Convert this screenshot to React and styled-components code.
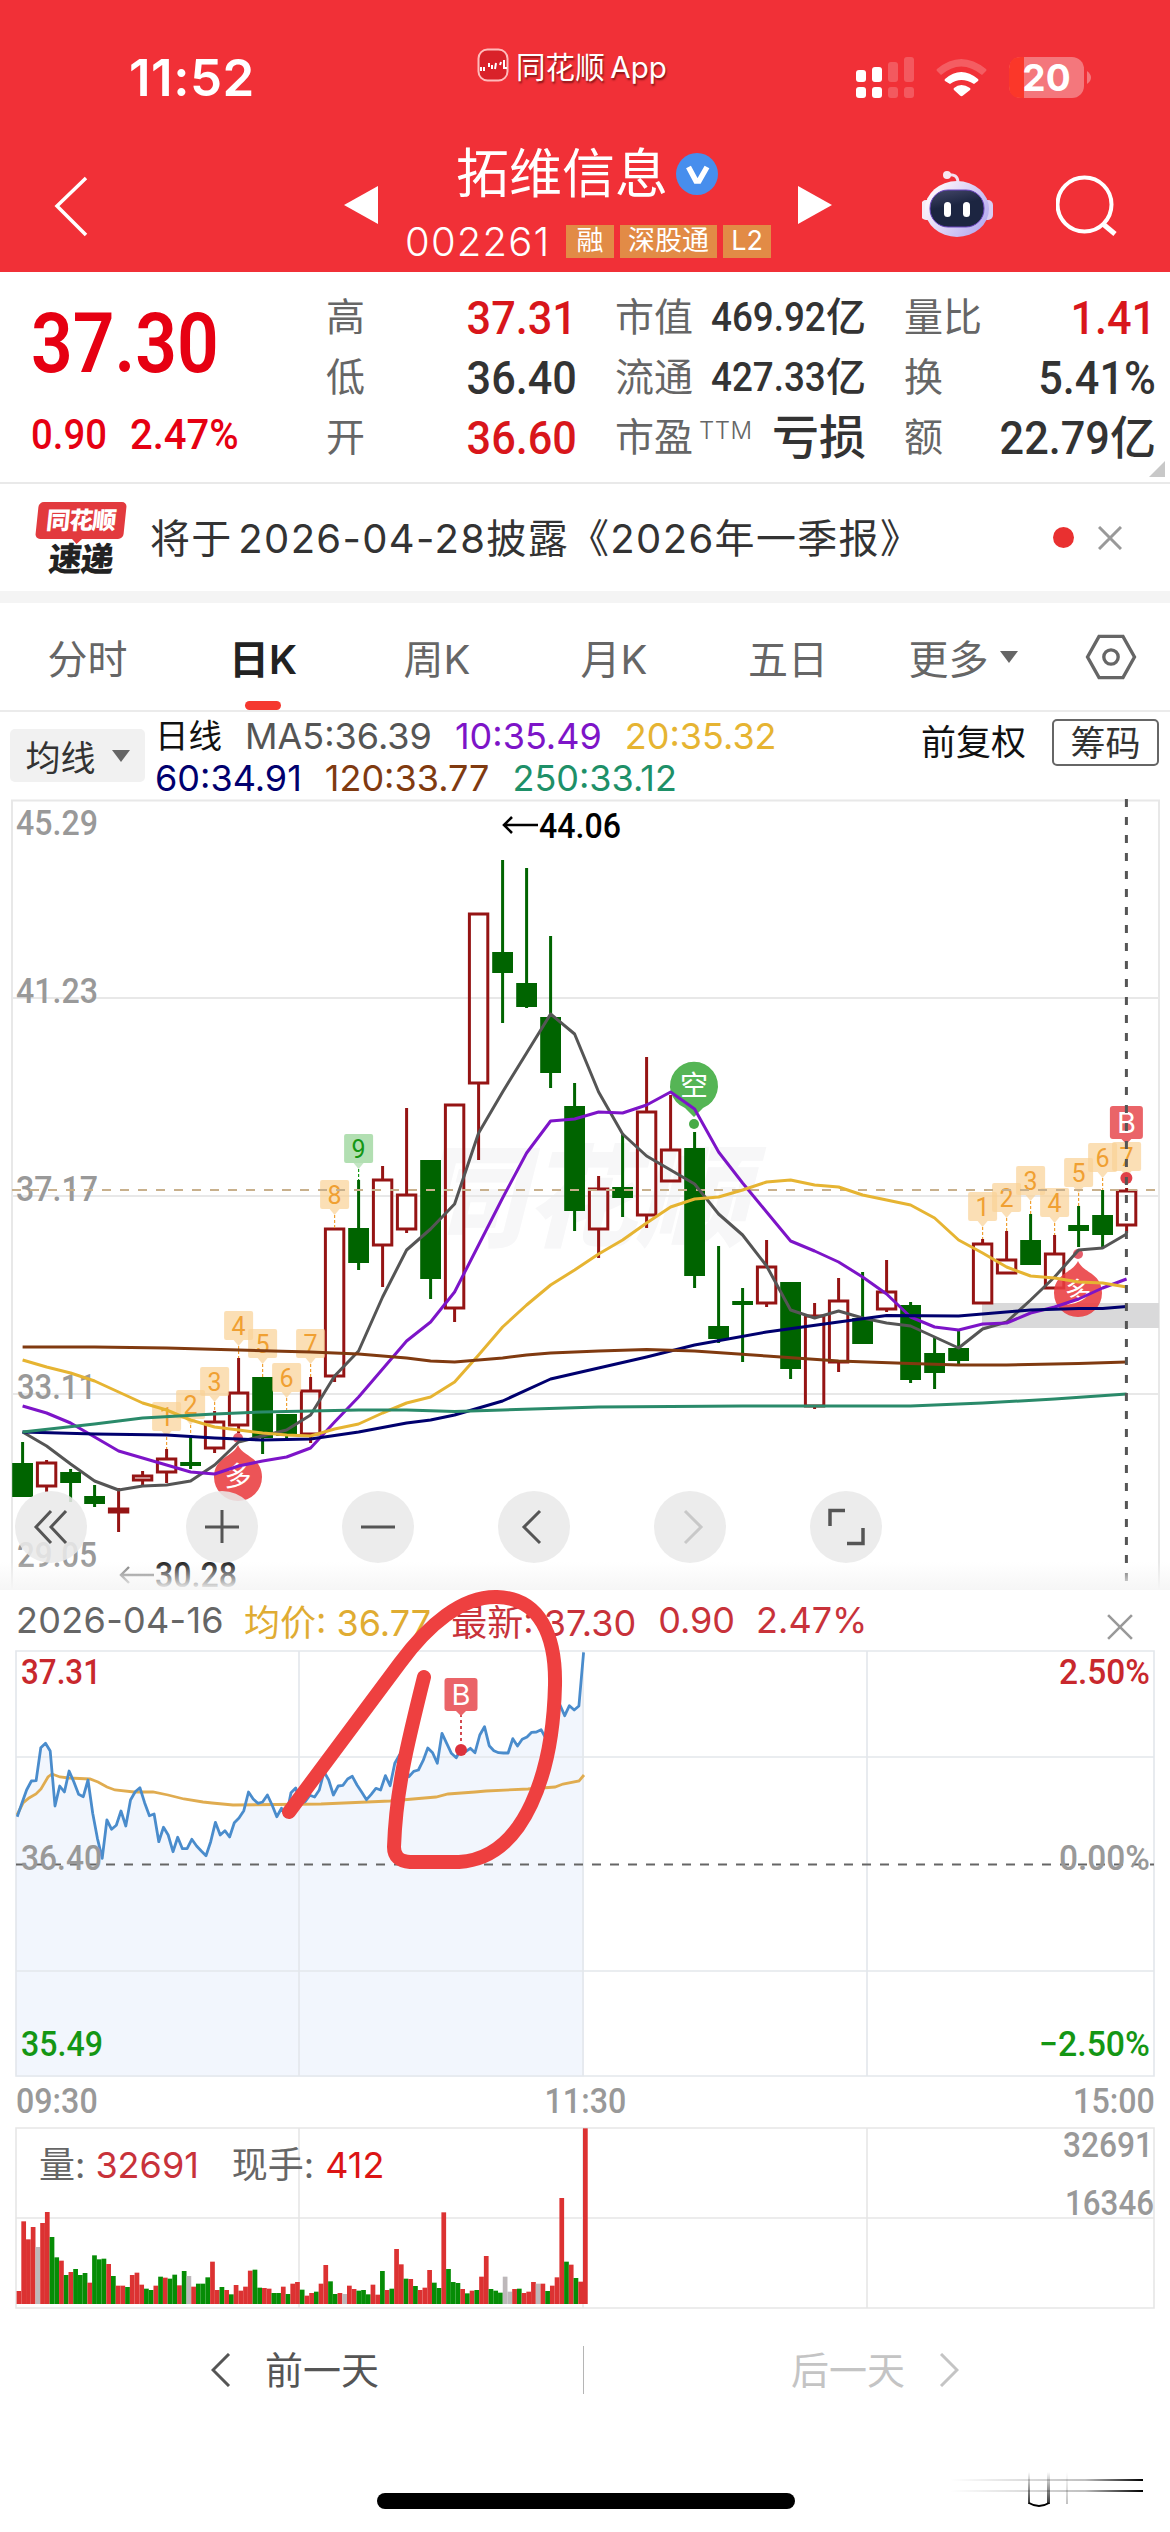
import styled, { createGlobalStyle } from "styled-components";

const GlobalStyle = createGlobalStyle`
    body {
        margin: 0;
        background: #fff;
        font-family: Inter, "Noto Sans CJK SC", sans-serif;
        color: #333;
    }
    * {
        box-sizing: border-box;
    }
`;

const RED = "#d8161b";
const GREEN = "#006400";

const Screen = styled.div`
    width: 1170px;
    height: 2532px;
    display: flex;
    flex-direction: column;
    overflow: hidden;
    position: relative;
    background: #fff;
    white-space: nowrap;
`;

/* narrow figures, squeezed toward the side they are aligned to */
const Num = styled.span`
    display: inline-block;
    font-family: Roboto, sans-serif;
    font-weight: ${(props) => props.$weight || 500};
    font-size: ${(props) => props.$size || 47}px;
    line-height: 1;
    transform: scaleX(${(props) => props.$squeeze || 0.92});
    transform-origin: ${(props) => props.$from || "right"} center;
`;

/* ---------- header ---------- */

const Header = styled.header`
    height: 272px;
    background: #f13037;
    color: #fff;
    display: flex;
    flex-direction: column;
`;

const StatusBar = styled.div`
    height: 136px;
    display: grid;
    grid-template-columns: 477px 379px 1fr;
`;

const Clock = styled.div`
    padding: 48px 0 0 129px;
    font-size: 51px;
    line-height: 60px;
    font-weight: 600;
    letter-spacing: 0.5px;
`;

const SourceApp = styled.div`
    display: flex;
    align-items: center;
    gap: 7px;
    height: 40px;
    margin-top: 45px;
    font-size: 29.5px;
    text-shadow: 1px 2px 2px rgba(60, 0, 0, 0.6);
    span {
        letter-spacing: 0.1px;
        word-spacing: -3px;
    }
`;

const StatusIcons = styled.svg`
    margin-top: 50px;
`;

const NavBar = styled.div`
    height: 136px;
    display: grid;
    grid-template-columns: 344px 454px 124px 134px 1fr;
`;

const NavSide = styled.div`
    display: flex;
    justify-content: space-between;
    padding-left: 53px;
    svg + svg {
        margin-right: -36px;
    }
`;

const StockTitle = styled.div`
    padding-left: 61px;
    display: flex;
    flex-direction: column;
`;

const StockName = styled.div`
    display: flex;
    align-items: center;
    gap: 8px;
    height: 60px;
    margin: 8px 0 0 51px;
    font-size: 53px;
    line-height: 52px;
`;

const StockCode = styled.div`
    display: flex;
    align-items: center;
    height: 34px;
    margin-top: 20px;
    gap: 6px;
    font-size: 40px;
    font-weight: 300;
    letter-spacing: 1.2px;
    span {
        width: 155px;
    }
`;

const Tag = styled.div`
    width: ${(props) => props.$width}px;
    height: 33px;
    background: #e28b46;
    font-size: 27px;
    font-weight: 400;
    line-height: 32px;
    text-align: center;
    letter-spacing: 0;
`;

/* ---------- quote ---------- */

const Quote = styled.section`
    height: 212px;
    border-bottom: 2px solid #e9e9e9;
    display: grid;
    grid-template-columns: 257px 251px 251px 252px;
    column-gap: 38px;
    padding-left: 31px;
    position: relative;
`;

const Latest = styled.div`
    color: #e60012;
    padding-top: 30px;
`;

const Change = styled.div`
    display: flex;
    margin-top: 27px;
    height: 44px;
    span + span {
        margin-left: 14px;
    }
`;

const QuoteColumn = styled.div`
    display: grid;
    grid-template-rows: repeat(3, 60px);
    align-content: start;
    padding-top: 15px;
`;

const QuoteCell = styled.div`
    display: flex;
    align-items: center;
    justify-content: space-between;
    color: ${(props) => props.$color || "#333"};
    font-size: ${(props) => props.$size || 40}px;
    line-height: 56px;
    font-weight: 500;
`;

const Label = styled.span`
    color: #666;
    font-size: 39px;
    font-weight: 400;
    sup {
        font-size: 24px;
        font-weight: 300;
        line-height: 0;
        letter-spacing: 0.5px;
        padding-left: 6px;
        vertical-align: 12px;
    }
`;

const CornerFold = styled.div`
    position: absolute;
    right: 5px;
    bottom: 5px;
    border: 8px solid transparent;
    border-right-color: #c8c8c8;
    border-bottom-color: #c8c8c8;
`;

/* ---------- news strip ---------- */

const News = styled.section`
    height: 119px;
    border-bottom: 12px solid #f4f4f4;
    display: flex;
    align-items: center;
    padding: 0 48px 0 37px;
`;

const ExpressLogo = styled.div`
    width: 88px;
    margin-right: 25px;
    text-align: center;
    font-weight: 900;
    font-size: 33px;
    line-height: 34px;
    color: #222;
    letter-spacing: -1px;
`;

const ExpressTop = styled.div`
    position: relative;
    height: 37px;
    margin-bottom: 5px;
    border-radius: 5px;
    background: #e23a3e;
    color: #fff;
    font-size: 24px;
    line-height: 37px;
    transform: skewX(-6deg);
    &::after {
        content: "";
        position: absolute;
        left: 36px;
        top: 36px;
        border: 6px solid transparent;
        border-top-color: #e23a3e;
    }
`;

const ExpressBottom = styled.div`
    transform: skewX(-6deg);
    line-height: 30px;
`;

const Headline = styled.div`
    flex: 1;
    font-size: 40px;
    letter-spacing: 1.35px;
    word-spacing: -7px;
    margin-top: -3px;
`;

const UnreadDot = styled.div`
    width: 21px;
    height: 21px;
    border-radius: 50%;
    background: #e93030;
    margin-right: 24px;
`;

/* ---------- period tabs ---------- */

const Tabs = styled.nav`
    height: 109px;
    border-bottom: 2px solid #ebebeb;
    display: grid;
    grid-template-columns: 175px 176px 172px 182px 166px 214px 1fr;
    align-items: center;
`;

const Tab = styled.div`
    position: relative;
    height: 107px;
    display: flex;
    align-items: center;
    justify-content: center;
    gap: 11px;
    font-size: 40px;
    color: ${(props) => (props.$active ? "#222" : "#666")};
    font-weight: ${(props) => (props.$active ? 600 : 400)};
    &:nth-child(6) {
        padding-right: 30px;
    }
    &::after {
        content: "";
        display: ${(props) => (props.$active ? "block" : "none")};
        position: absolute;
        left: 70px;
        bottom: 0;
        width: 36px;
        height: 9px;
        border-radius: 5px;
        background: #f5382f;
    }
`;

const Triangle = styled.i`
    border: ${(props) => props.$size}px solid transparent;
    border-top: ${(props) => props.$size * 1.35}px solid #666;
    border-bottom: 0;
`;

/* ---------- moving averages ---------- */

const Averages = styled.section`
    height: 87px;
    display: flex;
    padding: 4px 11px 0 10px;
`;

const AverageButton = styled.button`
    width: 135px;
    height: 53px;
    margin: 13px 10px 0 0;
    border: 0;
    border-radius: 5px;
    background: #f1f1f1;
    color: #333;
    font: inherit;
    font-size: 35px;
    display: flex;
    align-items: center;
    justify-content: center;
    gap: 16px;
    padding: 0;
`;

const AverageList = styled.div`
    flex: 1;
    display: flex;
    flex-direction: column;
`;

const AverageRow = styled.div`
    display: flex;
    height: 42px;
    line-height: 40px;
    gap: 23px;
`;

const Average = styled.span`
    color: ${(props) => props.$color};
    font-size: ${(props) => props.$size || 36}px;
`;

const Adjust = styled.div`
    font-size: 35px;
    line-height: 52px;
    color: #111;
    margin-right: 26px;
`;

const ChipButton = styled.button`
    width: 107px;
    height: 47px;
    margin-top: 3px;
    padding: 0;
    border: 2px solid #666;
    border-radius: 5px;
    background: #fff;
    font: inherit;
    font-size: 35px;
    line-height: 40px;
    color: #333;
`;

/* ---------- charts ---------- */

const ChartArea = styled.section`
    position: relative;
    height: 791px;
    svg {
        display: block;
        overflow: visible;
    }
`;

const ChartTools = styled.div`
    position: absolute;
    left: 15px;
    top: 692px;
    display: flex;
    gap: 84px;
    button:first-child {
        margin-right: 15px;
    }
`;

const ToolButton = styled.button`
    width: 72px;
    height: 72px;
    padding: 0;
    border: 0;
    border-radius: 50%;
    background: rgba(233, 233, 233, 0.88);
    display: flex;
    align-items: center;
    justify-content: center;
`;

const DayHeader = styled.div`
    height: 60px;
    display: flex;
    align-items: center;
    padding: 0 37px 0 16px;
    font-size: 36px;
    color: #666;
    svg {
        margin: 14px 0 0 auto;
    }
`;

const DayDate = styled.span`
    letter-spacing: 0.3px;
`;

const DayValue = styled.span`
    color: ${(props) => props.$color};
    margin-left: ${(props) => props.$gap}px;
`;

const DayChart = styled.svg`
    display: block;
`;

const TimeAxis = styled.div`
    height: 48px;
    display: grid;
    grid-template-columns: 1fr 1fr 1fr;
    align-items: center;
    padding: 0 15px 0 16px;
    color: #999;
    span:nth-child(2) {
        justify-self: center;
    }
    span:nth-child(3) {
        justify-self: end;
    }
`;

const VolumeArea = styled.section`
    position: relative;
    height: 184px;
    svg {
        display: block;
    }
`;

const VolumeLegend = styled.div`
    position: absolute;
    left: 39px;
    top: 18px;
    font-size: 36px;
    line-height: 44px;
    color: #666;
    display: flex;
`;

const DayNav = styled.footer`
    height: 122px;
    display: grid;
    grid-template-columns: 583px 1fr;
    align-items: center;
`;

const DayLink = styled.div`
    display: flex;
    align-items: center;
    gap: 34px;
    height: 48px;
    font-size: 38px;
    padding-left: ${(props) => (props.$next ? 207 : 211)}px;
    color: ${(props) => (props.$next ? "#c4c4c4" : "#555")};
    border-left: ${(props) => (props.$next ? "1px solid #b5b5b5" : 0)};
    span {
        margin-top: -5px;
    }
`;

const HomeIndicator = styled.div`
    width: 418px;
    height: 16px;
    border-radius: 8px;
    background: #000;
    margin: 62px 0 0 377px;
`;

const Scribble = styled.svg`
    position: absolute;
    left: 270px;
    top: 1570px;
    pointer-events: none;
`;

const CornerMark = styled.svg`
    position: absolute;
    left: 950px;
    top: 2470px;
`;

// [body top, body bottom, high, low, rising]
const candles = [
    [1463, 1497, 1442, 1497, 0],
    [1462, 1486, 1460, 1492, 1],
    [1472, 1483, 1469, 1502, 0],
    [1496, 1504, 1485, 1507, 0],
    [1508, 1512, 1488, 1532, 1],
    [1475, 1480, 1471, 1487, 1],
    [1458, 1472, 1449, 1483, 1],
    [1462, 1466, 1435, 1469, 0],
    [1421, 1448, 1411, 1453, 1],
    [1392, 1425, 1358, 1433, 1],
    [1377, 1438, 1377, 1454, 0],
    [1414, 1436, 1414, 1438, 0],
    [1390, 1434, 1377, 1443, 1],
    [1228, 1376, 1228, 1382, 1],
    [1228, 1263, 1180, 1270, 0],
    [1179, 1245, 1166, 1287, 1],
    [1194, 1229, 1108, 1233, 1],
    [1160, 1279, 1160, 1299, 0],
    [1104, 1308, 1104, 1322, 1],
    [913, 1083, 913, 1160, 1],
    [952, 973, 860, 1023, 0],
    [983, 1007, 868, 1008, 0],
    [1017, 1073, 936, 1088, 0],
    [1106, 1211, 1083, 1231, 0],
    [1188, 1229, 1176, 1258, 1],
    [1187, 1198, 1133, 1217, 0],
    [1111, 1215, 1057, 1228, 1],
    [1149, 1181, 1095, 1181, 1],
    [1148, 1276, 1132, 1288, 0],
    [1326, 1339, 1246, 1343, 0],
    [1301, 1305, 1288, 1362, 0],
    [1266, 1303, 1240, 1307, 1],
    [1282, 1369, 1282, 1379, 0],
    [1315, 1406, 1303, 1409, 1],
    [1300, 1362, 1278, 1372, 1],
    [1318, 1344, 1272, 1344, 0],
    [1291, 1309, 1260, 1312, 1],
    [1305, 1380, 1302, 1383, 0],
    [1353, 1373, 1337, 1389, 0],
    [1348, 1361, 1331, 1366, 0],
    [1243, 1303, 1239, 1303, 1],
    [1259, 1273, 1231, 1273, 1],
    [1240, 1265, 1214, 1265, 0],
    [1253, 1288, 1235, 1288, 1],
    [1225, 1231, 1206, 1247, 0],
    [1215, 1235, 1190, 1247, 0],
    [1190, 1225, 1188, 1233, 1],
];

// "candle index,y" pairs for MA5, 10, 20, 60, 120 and 250
const averageLines = [
    {
        color: "#555",
        points: "0,1432 1,1446 2,1464 3,1481 4,1490 5,1486 6,1485 7,1481 8,1465 9,1442 10,1436 11,1430 12,1415 13,1376 14,1351 15,1297 16,1250 17,1229 18,1204 19,1133 20,1092 21,1053 22,1014 23,1034 24,1092 25,1134 26,1156 27,1170 28,1184 29,1214 30,1235 31,1266 32,1310 33,1318 34,1311 35,1318 36,1323 37,1326 38,1337 39,1348 40,1329 41,1322 42,1300 43,1277 44,1250 45,1248 46,1234",
    },
    {
        color: "#7d14c8",
        points: "0,1406 1,1413 2,1423 3,1437 4,1451 5,1458 6,1465 7,1472 8,1474 9,1466 10,1461 11,1457 12,1448 13,1422 14,1397 15,1369 16,1341 17,1322 18,1292 19,1245 20,1198 21,1153 22,1121 23,1119 24,1112 25,1113 26,1105 27,1092 28,1109 29,1152 30,1183 31,1212 32,1241 33,1251 34,1262 35,1277 36,1294 37,1317 38,1327 39,1330 40,1324 41,1323 42,1313 43,1307 44,1299 45,1288 46,1279",
    },
    {
        color: "#e6b432",
        points: "0,1360 1,1367 2,1373 3,1381 4,1392 5,1403 6,1410 7,1420 8,1427 9,1430 10,1433 11,1435 12,1436 13,1429 14,1424 15,1413 16,1403 17,1397 18,1382 19,1355 20,1327 21,1305 22,1285 23,1270 24,1254 25,1240 26,1223 27,1207 28,1199 29,1197 30,1190 31,1182 32,1180 33,1185 34,1187 35,1195 36,1200 37,1205 38,1218 39,1240 40,1253 41,1267 42,1276 43,1278 44,1282 45,1283 46,1287",
    },
    {
        color: "#00006e",
        points: "0,1432 3,1434 6,1435 8,1438 10,1440 12,1439 14,1432 16,1423 17,1420 18,1415 20,1401 22,1379 24,1368 26,1357 28,1345 31,1332 34,1322 36,1315.5 39,1316 42,1310 44,1308.5 45,1308.5 46,1306.5",
    },
    {
        color: "#803a10",
        points: "0,1347 3,1347 6,1348 9,1350 12,1352 14,1354 16,1358 17,1361 18,1362 20,1358 21,1355 22,1353 24,1351 26,1349.5 28,1351 31,1356 34,1361 37,1363.5 39,1365 41,1365 44,1363.5 46,1362",
    },
    {
        color: "#2a8a6a",
        points: "0,1432 3,1424 5,1418 8,1414 10,1412 14,1410 16,1410 18,1411.5 20,1410 24,1407 30,1406 37,1406 40,1403 43,1399 46,1394",
    },
];

// [candle index, number, box top, end of the dotted stem]
const counts = [
    [6, 1, 1402, 1449],
    [7, 2, 1390, 1435],
    [8, 3, 1367, 1411],
    [9, 4, 1311, 1358],
    [10, 5, 1329, 1377],
    [11, 6, 1363, 1412],
    [12, 7, 1329, 1377],
    [13, 8, 1180, 1228],
    [14, 9, 1134, 1180],
    [40, 1, 1192, 1239],
    [41, 2, 1183, 1231],
    [42, 3, 1166, 1214],
    [43, 4, 1188, 1235],
    [44, 5, 1158, 1206],
    [45, 6, 1143, 1190],
    [46, 7, 1142, 1174],
];

// one entry per minute, a third of a pixel each, measured from the panel's top
const ticks = [
    680, 640, 600, 573, 572, 473, 460, 483, 648, 588, 606, 543, 575, 613, 620, 570, 670, 745, 805, 690, 718, 706, 663,
    708, 630, 605, 593, 638, 677, 672, 755, 712, 735, 785, 742, 776, 776, 748, 768, 783, 797, 755, 697, 735, 722, 741,
    698, 684, 662, 606, 627, 640, 636, 615, 645, 680, 655, 680, 608, 594, 640, 635, 616, 621, 600, 545, 570, 615, 588,
    586, 567, 559, 585, 607, 629, 613, 595, 600, 557, 587, 520, 495, 520, 560, 544, 540, 512, 474, 488, 520, 430, 460,
    490, 503, 478, 485, 475, 488, 435, 410, 467, 482, 488, 489, 489, 446, 468, 448, 441, 427, 426, 419, 445, 400, 370,
    345, 377, 347, 360, 348, 187,
];

const averagePrice =
    "17,1815 23,1803 29,1798 36,1794 41,1789 48,1777 52,1774 60,1777 69,1778 90,1779 98,1782 107,1787 115,1790 134,1792 153,1792 168,1795 184,1799 203,1802 212,1803 233,1805 321,1804 344,1803 390,1801 436,1797 448,1794 475,1792 486,1791 528,1789 555,1787 563,1784 579,1781 584,1775";

// height in thirds of a pixel plus colour: r up, g down, x flat
const volumes =
    "39r 248r 194r 231r 171x 243r 276r 201g 140g 130r 87g 96r 105g 87g 93g 64r 146g 134g 136g 120r 84g 55r 55r 51g 87r 94r 58r 46g 42g 55r 82g 79r 76g 88g 56r 99g 84x 52r 61g 61g 80g 127r 42r 51g 42r 29g 57r 40r 52r 100r 103g 49g 48r 46r 33g 33g 52r 30g 61r 66r 43g 25r 33r 37g 61r 117r 68g 30g 33r 30x 55r 45r 40g 42g 29g 58r 28r 99g 42r 46g 165r 119r 76g 75r 54g 42r 49r 102r 64g 48g 275r 105g 66g 63g 45r 32g 40r 42g 82r 144r 45g 40g 34g 82x 37x 45r 46g 33r 37r 66r 61x 61r 39g 55r 80r 318r 127g 118r 78g 67r 527r".split(
        " "
    );

const volumeColors = { r: "#dc3232", g: "#068c06", x: "#bdb8ba" };

const candleX = (i) => 22.6 + i * 24;
const minuteX = (i) => 17.2 + i * 4.72;

function ChartText({ x, y, width, anchor = "start", fill = "#999", size = 35, weight = 500, children }) {
    return (
        <text
            x={x}
            y={y}
            fill={fill}
            fontSize={size}
            fontWeight={weight}
            fontFamily="Roboto, sans-serif"
            textAnchor={anchor}
            textLength={width}
            lengthAdjust="spacingAndGlyphs"
        >
            {children}
        </text>
    );
}

function Cross({ size, color = "#999", width = 3 }) {
    return (
        <svg width={size} height={size} viewBox="0 0 24 24" stroke={color} strokeWidth={(width * 24) / size}>
            <path d="M1 1 23 23M23 1 1 23" />
        </svg>
    );
}

function Candle({ index, data }) {
    const [top, bottom, high, low, rising] = data;
    const x = candleX(index);
    const color = rising ? "#951414" : GREEN;
    return (
        <g stroke={color} strokeWidth="3">
            <path d={`M${x} ${high}V${top}M${x} ${bottom}V${low}`} />
            <rect
                x={x - (rising ? 9.2 : 10.4)}
                y={rising ? top + 1 : top}
                width={rising ? 18.4 : 20.8}
                height={Math.max(rising ? bottom - top - 1 : bottom - top, 2)}
                fill={rising ? "none" : color}
                strokeWidth={rising ? 3 : 0}
            />
        </g>
    );
}

function CountBox({ index, number, top, end }) {
    const x = candleX(index);
    const green = number === 9;
    const color = green ? "#149614" : "#f0a032";
    const fill = green ? "#aadcaa" : "#fad296";
    return (
        <g>
            <rect x={x - 14.5} y={top} width="29" height="29" rx="2" fill={fill} opacity={green ? 0.9 : 0.7} />
            <path d={`M${x - 5} ${top + 29}h10l-5 6z`} fill={fill} opacity="0.7" />
            <path d={`M${x} ${top + 35}V${end}`} stroke={color} strokeWidth="1.2" strokeDasharray="3 2" />
            <ChartText x={x} y={top + 24} size={25} anchor="middle" weight={400} fill={color}>
                {number}
            </ChartText>
        </g>
    );
}

function BuyBox({ x, y }) {
    return (
        <g fill="#ea6468">
            <rect x={x - 16.5} y={y} width="33" height="33" rx="3" />
            <path d={`M${x - 6} ${y + 32}h12l-6 6z`} />
            <text x={x} y={y + 27} fill="#fff" fontSize="29" fontFamily="Inter, sans-serif" textAnchor="middle">
                B
            </text>
        </g>
    );
}

function LongPin({ x, y }) {
    return (
        <g>
            <path
                d={`M${x} ${y - 32}C${x + 5} ${y - 20} ${x + 24} ${y - 20} ${x + 24} ${y}A24 24 0 1 1 ${x - 24} ${y}C${x - 24} ${y - 20} ${x - 5} ${y - 20} ${x} ${y - 32}Z`}
                fill="#e93c40"
                opacity="0.88"
            />
            <circle cx={x} cy={y - 39} r="5" fill="#e04050" opacity="0.85" />
            <text x={x} y={y + 9} fill="#fff" fontSize="27" fontFamily="'Noto Sans CJK SC', sans-serif" textAnchor="middle">
                多
            </text>
        </g>
    );
}

function DailyChart() {
    return (
        <svg width="1170" height="791" viewBox="0 799 1170 791" fill="none">
            <defs>
                <linearGradient id="fade" x1="0" y1="0" x2="0" y2="1">
                    <stop offset="0" stopColor="#f6f6f6" stopOpacity="0" />
                    <stop offset="1" stopColor="#f6f6f6" />
                </linearGradient>
            </defs>
            <text
                x="414"
                y="1238"
                fill="#f7f7f8"
                fontSize="111"
                fontWeight="900"
                fontStyle="italic"
                fontFamily="'Noto Sans CJK SC', sans-serif"
            >
                同花顺
            </text>
            <path d="M12 1590V800.5H1159V1590M12 998H1159M12 1196H1159M12 1394H1159" stroke="#e8e8e8" strokeWidth="2" />
            <rect x="982" y="1303" width="177" height="25" fill="#d9d9da" />
            <ChartText x="16" y="835" width="82">45.29</ChartText>
            <ChartText x="16" y="1003" width="82">41.23</ChartText>
            <ChartText x="16" y="1201" width="82">37.17</ChartText>
            <ChartText x="17" y="1399" width="79">33.11</ChartText>
            <ChartText x="17" y="1567" width="80">29.05</ChartText>
            {candles.map((data, i) => (
                <Candle key={i} index={i} data={data} />
            ))}
            {counts.map(([index, number, top, end]) => (
                <CountBox key={index} index={index} number={number} top={top} end={end} />
            ))}
            <path d="M12 1190H1159" stroke="#c8b08c" strokeWidth="1.8" strokeDasharray="9 9" />
            <LongPin x={238} y={1477} />
            <LongPin x={1078} y={1293} />
            <path d="M694 1117l-9-9A24 24 0 1 1 703 1108Z" fill="#55b555" />
            <text x="694" y="1096" fill="#fff" fontSize="28" fontFamily="'Noto Sans CJK SC', sans-serif" textAnchor="middle">
                空
            </text>
            <circle cx="694" cy="1124" r="5" fill="#46aa46" />
            {averageLines.map((line) => (
                <polyline
                    key={line.color}
                    points={line.points
                        .split(" ")
                        .map((p) => p.split(","))
                        .map(([i, y]) => `${candleX(Number(i))},${y}`)
                        .join(" ")}
                    stroke={line.color}
                    strokeWidth="3"
                    strokeLinejoin="round"
                />
            ))}
            <path d="M504 825H538M512 817l-8 8 8 8" stroke="#000" strokeWidth="2.6" />
            <ChartText x="539" y="838" width="82" fill="#000">44.06</ChartText>
            <path d="M121 1575H154M129 1567l-8 8 8 8" stroke="#777" strokeWidth="2.4" />
            <ChartText x="155" y="1587" width="82" fill="#222">30.28</ChartText>
            <BuyBox x={1126.4} y={1106} />
            <circle cx="1126.4" cy="1178" r="6" fill="#e04048" />
            <path d="M1126.4 799V1582" stroke="#555" strokeWidth="3" strokeDasharray="8 10" />
            <rect x="0" y="1562" width="1170" height="28" fill="url(#fade)" />
        </svg>
    );
}

function IntradayChart() {
    const points = ticks.map((t, i) => `${minuteX(i).toFixed(1)},${(1590 + t / 3).toFixed(1)}`).join(" ");
    return (
        <DayChart width="1170" height="427" viewBox="0 1650 1170 427" fill="none">
            <polygon points={`16,2077 16,1817 ${points} 584,2077`} fill="#f2f6fd" />
            <path
                d="M16 1651H1154V2076H16ZM299 1651V2076M583 1651V2076M867 1651V2076M16 1757H1154M16 1971H1154"
                stroke="#e3e7ec"
                strokeWidth="1.6"
            />
            <path d="M16 1864.5H1154" stroke="#666" strokeWidth="1.8" strokeDasharray="9 9" />
            <polyline points={averagePrice} stroke="#e0ac50" strokeWidth="2.8" />
            <polyline points={points} stroke="#4a8ccc" strokeWidth="2.8" strokeLinejoin="round" />
            <ChartText x="21" y="1684" width="80" fill="#c8282d">37.31</ChartText>
            <ChartText x="21" y="1870" width="81">36.40</ChartText>
            <ChartText x="21" y="2056" width="82" fill="#149614">35.49</ChartText>
            <ChartText x="1150" y="1684" width="91" anchor="end" fill="#c8282d">2.50%</ChartText>
            <ChartText x="1150" y="1870" width="91" anchor="end">0.00%</ChartText>
            <ChartText x="1150" y="2056" width="111" anchor="end" fill="#149614">−2.50%</ChartText>
            <path d="M461 1714V1744" stroke="#d24a50" strokeWidth="2" strokeDasharray="3 3" />
            <BuyBox x={461} y={1678} />
            <circle cx="461" cy="1750" r="6" fill="#dc323c" />
        </DayChart>
    );
}

function VolumeChart() {
    return (
        <svg width="1170" height="184" viewBox="0 2125 1170 184" fill="none">
            <path
                d="M16 2128H1154V2308H16ZM299 2128V2308M583 2128V2308M867 2128V2308M16 2218H1154"
                stroke="#e6e6e6"
                strokeWidth="1.6"
            />
            {volumes.map((v, i) => {
                const height = parseInt(v, 10) / 3;
                return (
                    <rect
                        key={i}
                        x={16.6 + i * 4.72}
                        y={2304 - height}
                        width="4.72"
                        height={height}
                        fill={volumeColors[v.slice(-1)]}
                    />
                );
            })}
            <ChartText x="1153" y="2157" width="90" anchor="end">32691</ChartText>
            <ChartText x="1154" y="2215" width="89" anchor="end">16346</ChartText>
        </svg>
    );
}

function AppMark() {
    return (
        <svg width="32" height="34" viewBox="0 0 32 34" fill="none">
            <rect x="1.5" y="1.5" width="29" height="31" rx="9" fill="#d9222a" stroke="#fbb" strokeWidth="2" />
            <path d="M4 19v4M7 19v4M12 15v4M15 17v4M19 15l-1 6M24 14l-1 3M27 12v8h3" stroke="#fff" strokeWidth="2" />
        </svg>
    );
}

function PhoneStatus() {
    return (
        <StatusIcons width="250" height="60" viewBox="856 50 250 60">
            <g fill="#fff">
                <rect x="856" y="70" width="10" height="12" rx="3" />
                <rect x="872" y="67" width="10" height="15" rx="3" />
                <rect x="888" y="62" width="10" height="20" rx="3" opacity="0.2" />
                <rect x="904" y="57" width="10" height="25" rx="3" opacity="0.2" />
                <rect x="856" y="87" width="10" height="11" rx="3" />
                <rect x="872" y="87" width="10" height="11" rx="3" />
                <rect x="888" y="87" width="10" height="11" rx="3" opacity="0.2" />
                <rect x="904" y="87" width="10" height="11" rx="3" opacity="0.2" />
                <path d="M937 69Q961 49 986 69Q987 70 986 71L982 75Q961 58 941 75L937 71Q936 70 937 69Z" opacity="0.22" />
                <path d="M945 79Q961 65 978 79Q979 80 978 81L974 84Q961 76 950 84L945 81Q944 80 945 79Z" />
                <path d="M954 88Q961 82 970 88Q971 89 970 90L963 95.5Q961.5 97 960 95.5L954 90Q953 89 954 88Z" />
            </g>
            <rect x="1009" y="57" width="75" height="41" rx="12" fill="#f4777c" />
            <path d="M1024 57H1021Q1009 57 1009 69V86Q1009 98 1021 98H1024Z" fill="#fb3729" />
            <path d="M1087 71Q1091 74 1091 77.5T1087 84Z" fill="#f4777c" />
            <text x="1046.5" y="91" fill="#fff" fontSize="37" fontWeight="700" fontFamily="Inter, sans-serif" textAnchor="middle">
                20
            </text>
        </StatusIcons>
    );
}

function Robot() {
    return (
        <svg width="74" height="70" viewBox="920 170 74 70">
            <defs>
                <linearGradient id="shell" x1="0" y1="0" x2="1" y2="0.6">
                    <stop offset="0.2" stopColor="#fbf3fb" />
                    <stop offset="1" stopColor="#b9aef0" />
                </linearGradient>
                <linearGradient id="visor" x1="0" y1="0" x2="0.3" y2="1">
                    <stop offset="0" stopColor="#45486a" />
                    <stop offset="0.5" stopColor="#1c2541" />
                </linearGradient>
            </defs>
            <path d="M947 175Q958 173 958 183" fill="none" stroke="#f3dfee" strokeWidth="3" />
            <circle cx="947" cy="175" r="4" fill="#f8e8f2" />
            <rect x="921" y="200" width="12" height="20" rx="5" fill="#f5eaf5" />
            <rect x="981" y="200" width="12" height="20" rx="5" fill="#d9ccf2" />
            <ellipse cx="957" cy="209" rx="32" ry="28" fill="url(#shell)" />
            <rect x="930" y="190" width="54" height="37" rx="18" fill="url(#visor)" stroke="#6b45c0" strokeWidth="1" />
            <rect x="944" y="202" width="7" height="15" rx="3.5" fill="#fff" />
            <rect x="963" y="202" width="7" height="15" rx="3.5" fill="#fff" />
        </svg>
    );
}

export default function App() {
    return (
        <Screen>
            <GlobalStyle />
            <Header>
                <StatusBar>
                    <Clock>11:52</Clock>
                    <SourceApp>
                        <AppMark />
                        <span>同花顺 App</span>
                    </SourceApp>
                    <PhoneStatus />
                </StatusBar>
                <NavBar>
                    <NavSide>
                        <svg width="36" height="136" fill="none" stroke="#fff" strokeWidth="3.5">
                            <path d="M33 42 4 70 33 99" />
                        </svg>
                        <svg width="36" height="136" fill="#fff">
                            <path d="M0 69 34 50V88Z" />
                        </svg>
                    </NavSide>
                    <StockTitle>
                        <StockName>
                            拓维信息
                            <svg width="42" height="42" viewBox="0 0 42 42">
                                <circle cx="21" cy="21" r="21" fill="#478eed" />
                                <path d="M12.5 14 20 28H23L31 14" fill="none" stroke="#fff" strokeWidth="5.5" />
                            </svg>
                        </StockName>
                        <StockCode>
                            <span>002261</span>
                            <Tag $width={48}>融</Tag>
                            <Tag $width={97}>深股通</Tag>
                            <Tag $width={48}>L2</Tag>
                        </StockCode>
                    </StockTitle>
                    <svg width="36" height="136" fill="#fff">
                        <path d="M34 69 0 50V88Z" />
                    </svg>
                    <svg width="74" height="136" viewBox="0 0 74 136">
                        <g transform="translate(-2 34)">
                            <Robot />
                        </g>
                    </svg>
                    <svg width="64" height="136" fill="none" stroke="#fff" strokeWidth="4">
                        <circle cx="28.5" cy="68.5" r="27" />
                        <path d="M47 88 59 98" strokeWidth="5" />
                    </svg>
                </NavBar>
            </Header>

            <Quote>
                <Latest>
                    <Num $size={84} $squeeze={0.87} $weight={600} $from="left">
                        37.30
                    </Num>
                    <Change>
                        <Num $size={43} $squeeze={0.89} $from="left">0.90</Num>
                        <Num $size={43} $squeeze={0.93} $from="left">2.47%</Num>
                    </Change>
                </Latest>
                <QuoteColumn>
                    <QuoteCell $color={RED}>
                        <Label>高</Label>
                        <Num>37.31</Num>
                    </QuoteCell>
                    <QuoteCell>
                        <Label>低</Label>
                        <Num>36.40</Num>
                    </QuoteCell>
                    <QuoteCell $color={RED}>
                        <Label>开</Label>
                        <Num>36.60</Num>
                    </QuoteCell>
                </QuoteColumn>
                <QuoteColumn>
                    <QuoteCell>
                        <Label>市值</Label>
                        <span>
                            <Num $size={40}>469.92</Num>亿
                        </span>
                    </QuoteCell>
                    <QuoteCell>
                        <Label>流通</Label>
                        <span>
                            <Num $size={40}>427.33</Num>亿
                        </span>
                    </QuoteCell>
                    <QuoteCell $size={47}>
                        <Label>
                            市盈<sup>TTM</sup>
                        </Label>
                        亏损
                    </QuoteCell>
                </QuoteColumn>
                <QuoteColumn>
                    <QuoteCell $color={RED}>
                        <Label>量比</Label>
                        <Num>1.41</Num>
                    </QuoteCell>
                    <QuoteCell>
                        <Label>换</Label>
                        <Num>5.41%</Num>
                    </QuoteCell>
                    <QuoteCell $size={46}>
                        <Label>额</Label>
                        <span>
                            <Num>22.79</Num>亿
                        </span>
                    </QuoteCell>
                </QuoteColumn>
                <CornerFold />
            </Quote>

            <News>
                <ExpressLogo>
                    <ExpressTop>同花顺</ExpressTop>
                    <ExpressBottom>速递</ExpressBottom>
                </ExpressLogo>
                <Headline>将于 2026-04-28披露《2026年一季报》</Headline>
                <UnreadDot />
                <Cross size={24} />
            </News>

            <Tabs>
                <Tab>分时</Tab>
                <Tab $active>日K</Tab>
                <Tab>周K</Tab>
                <Tab>月K</Tab>
                <Tab>五日</Tab>
                <Tab>
                    更多
                    <Triangle $size={9.5} />
                </Tab>
                <svg width="52" height="46" viewBox="0 0 54 48" fill="none" stroke="#666" strokeWidth="3.5">
                    <path d="M14.5 2.5H39.5L51.5 24 39.5 45.5H14.5L2.5 24Z" />
                    <circle cx="27" cy="24" r="7.5" />
                </svg>
            </Tabs>

            <Averages>
                <AverageButton>
                    均线
                    <Triangle $size={9.5} />
                </AverageButton>
                <AverageList>
                    <AverageRow>
                        <Average $color="#111" $size={33.5}>日线</Average>
                        <Average $color="#555">MA5:36.39</Average>
                        <Average $color="#7d14c8">10:35.49</Average>
                        <Average $color="#e6b432">20:35.32</Average>
                    </AverageRow>
                    <AverageRow>
                        <Average $color="#00006e">60:34.91</Average>
                        <Average $color="#803a10">120:33.77</Average>
                        <Average $color="#1e9068">250:33.12</Average>
                    </AverageRow>
                </AverageList>
                <Adjust>前复权</Adjust>
                <ChipButton>筹码</ChipButton>
            </Averages>

            <ChartArea>
                <DailyChart />
                <ChartTools>
                    <ToolButton>
                        <svg width="36" height="36" fill="none" stroke="#555" strokeWidth="3">
                            <path d="M18 2 3 18 18 34M33 2 18 18 33 34" />
                        </svg>
                    </ToolButton>
                    <ToolButton>
                        <svg width="36" height="36" fill="none" stroke="#555" strokeWidth="3">
                            <path d="M18 1V34M1 18H35" />
                        </svg>
                    </ToolButton>
                    <ToolButton>
                        <svg width="36" height="36" fill="none" stroke="#555" strokeWidth="3">
                            <path d="M1 18H35" />
                        </svg>
                    </ToolButton>
                    <ToolButton>
                        <svg width="36" height="36" fill="none" stroke="#555" strokeWidth="3">
                            <path d="M24 2 8 18 24 34" />
                        </svg>
                    </ToolButton>
                    <ToolButton>
                        <svg width="36" height="36" fill="none" stroke="#c8c8c8" strokeWidth="3">
                            <path d="M13 2 29 18 13 34" />
                        </svg>
                    </ToolButton>
                    <ToolButton>
                        <svg width="36" height="38" fill="none" stroke="#555" strokeWidth="3.5">
                            <path d="M17 2.5H2V18M19 35.5H35V20" />
                        </svg>
                    </ToolButton>
                </ChartTools>
            </ChartArea>

            <DayHeader>
                <DayDate>2026-04-16</DayDate>
                <DayValue $color="#e0ac32" $gap={20}>均价: 36.77</DayValue>
                <DayValue $color="#c8323a" $gap={20}>最新: 37.30</DayValue>
                <DayValue $color="#c8323a" $gap={22}>0.90</DayValue>
                <DayValue $color="#c8323a" $gap={21}>2.47%</DayValue>
                <Cross size={26} width={2.6} />
            </DayHeader>
            <IntradayChart />
            <TimeAxis>
                <Num $size={35} $from="left">09:30</Num>
                <Num $size={35} $from="center">11:30</Num>
                <Num $size={35}>15:00</Num>
            </TimeAxis>
            <VolumeArea>
                <VolumeChart />
                <VolumeLegend>
                    量: <DayValue $color="#c8323a" $gap={10}>32691</DayValue>
                    <DayValue $gap={33}>现手:</DayValue>
                    <DayValue $color="#dc1414" $gap={11}>412</DayValue>
                </VolumeLegend>
            </VolumeArea>

            <DayNav>
                <DayLink>
                    <svg width="20" height="34" fill="none" stroke="#555" strokeWidth="3">
                        <path d="M18 1 2 17 18 33" />
                    </svg>
                    <span>前一天</span>
                </DayLink>
                <DayLink $next>
                    <span>后一天</span>
                    <svg width="20" height="34" fill="none" stroke="#c4c4c4" strokeWidth="3">
                        <path d="M2 1 18 17 2 33" />
                    </svg>
                </DayLink>
            </DayNav>
            <HomeIndicator />

            <Scribble width="310" height="320" viewBox="270 1570 310 320" fill="none">
                <path
                    d="M289 1812 400 1663C428 1625 462 1596 497 1597C540 1598 556 1636 555 1685C553 1770 526 1858 459 1862H410Q394 1861 394 1847C396 1790 407 1745 424 1677"
                    stroke="#ee4040"
                    strokeWidth="14"
                    strokeLinecap="round"
                    strokeLinejoin="round"
                />
            </Scribble>
            <CornerMark width="200" height="40" viewBox="950 2470 200 40" fill="none">
                <defs>
                    <linearGradient id="streak">
                        <stop offset="0" stopColor="#000" stopOpacity="0" />
                        <stop offset="0.7" stopColor="#000" stopOpacity="0.25" />
                        <stop offset="1" stopColor="#000" />
                    </linearGradient>
                    <linearGradient id="drip" x1="0" y1="0" x2="0" y2="1">
                        <stop offset="0" stopColor="#000" stopOpacity="0" />
                        <stop offset="1" stopColor="#000" stopOpacity="0.8" />
                    </linearGradient>
                </defs>
                <rect x="950" y="2479" width="193" height="2" fill="url(#streak)" />
                <rect x="950" y="2490" width="193" height="2" fill="url(#streak)" />
                <rect x="1028" y="2472" width="2" height="32" fill="url(#drip)" />
                <rect x="1047" y="2472" width="3" height="32" fill="url(#drip)" />
                <rect x="1066" y="2472" width="2" height="32" fill="url(#drip)" opacity="0.3" />
                <path d="M1029 2503Q1039 2509 1049 2503" stroke="#000" strokeWidth="2" />
            </CornerMark>
        </Screen>
    );
}
